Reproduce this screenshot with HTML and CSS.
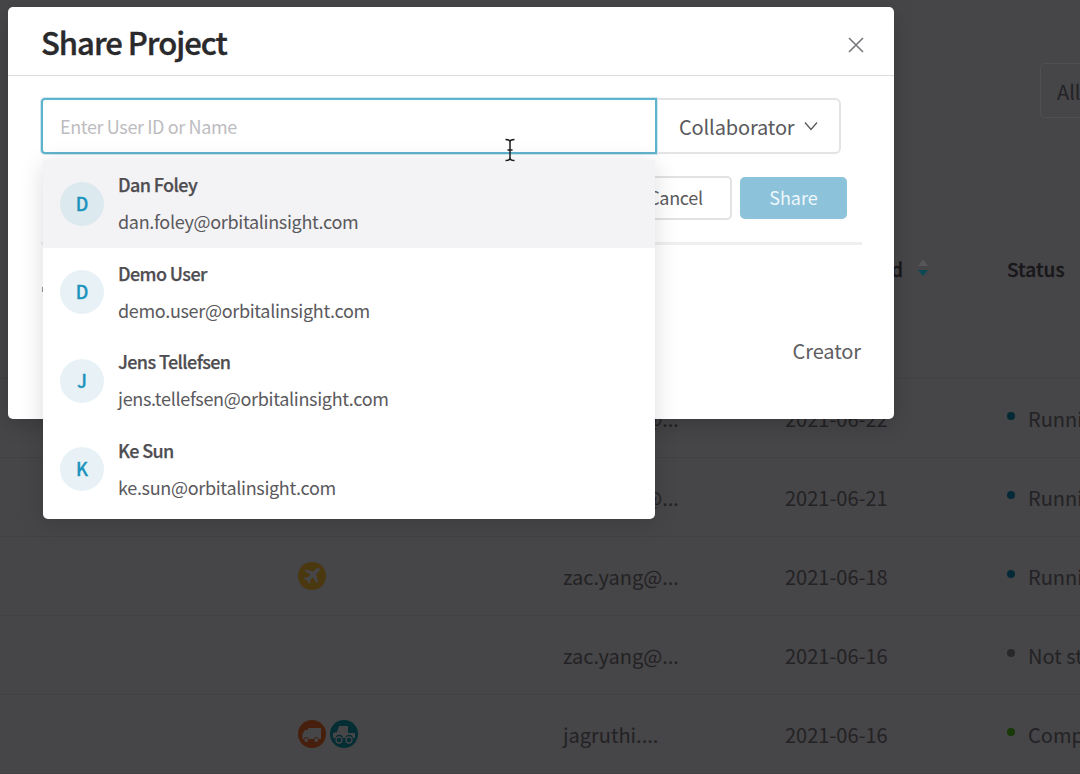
FILE: index.html
```html
<!DOCTYPE html>
<html lang="en">
<head>
<meta charset="utf-8">
<title>Share Project</title>
<link rel="stylesheet" href="styles.css">
</head>
<body>
<main class="page">
  <div class="toolbar"><div class="filter">All</div></div>
  <div class="table">
    <div class="row head">
      <div class="c-icons"></div>
      <div class="c-creator"></div>
      <div class="c-date strong">Date Created
        <svg class="sorter" width="12" height="18" viewBox="0 0 12 18"><path d="M6 0l5 7H1z" fill="#565559"/><path d="M1 11h10l-5 6z" fill="#0a4a55"/></svg>
      </div>
      <div class="c-status strong">Status</div>
    </div>
    <div class="row">
      <div class="c-icons"></div><div class="c-creator">zac.yang@...</div><div class="c-date"></div><div class="c-status"></div>
    </div>
    <div class="row">
      <div class="c-icons"></div><div class="c-creator">zac.yang@...</div><div class="c-date">2021-06-22</div>
      <div class="c-status"><i class="dot run"></i>Running</div>
    </div>
    <div class="row">
      <div class="c-icons"></div><div class="c-creator">zac.yang@...</div><div class="c-date">2021-06-21</div>
      <div class="c-status"><i class="dot run"></i>Running</div>
    </div>
    <div class="row">
      <div class="c-icons">
        <svg class="badge" viewBox="0 0 28 28"><circle cx="14" cy="14" r="14" fill="#4a380f"/><path class="glyph" d="M21.500 6.500c-1-1-2.500-.7-3.500.3l-2.600 2.600-7.500-1.900-1.500 1.500 6 3.600-3 3-2.600-.4-1.200 1.200 3.600 2 2 3.600 1.200-1.200-.4-2.600 3-3 3.600 6 1.500-1.500-1.900-7.500 2.600-2.600c1-1 1.300-2.500.7-3.100z"/></svg>
      </div>
      <div class="c-creator">zac.yang@...</div><div class="c-date">2021-06-18</div>
      <div class="c-status"><i class="dot run"></i>Running</div>
    </div>
    <div class="row">
      <div class="c-icons"></div><div class="c-creator">zac.yang@...</div><div class="c-date">2021-06-16</div>
      <div class="c-status"><i class="dot idle"></i>Not started</div>
    </div>
    <div class="row">
      <div class="c-icons">
        <svg class="badge" viewBox="0 0 28 28"><circle cx="14" cy="14" r="14" fill="#46200c"/><path class="glyph" d="M10 8h13v11h-2.200a2.600 2.600 0 0 0-5 0h-5a2.600 2.600 0 0 0-5 0H4.500v-5L7 10h3z"/><circle class="glyph" cx="8.300" cy="20" r="2"/><circle class="glyph" cx="18.300" cy="20" r="2"/></svg>
        <svg class="badge" viewBox="0 0 28 28"><circle cx="14" cy="14" r="14" fill="#052d34"/><path class="glyph" d="M9 6h9v7h7v5h-2a3.800 3.800 0 0 0-7.500 0h-2.500a3.800 3.800 0 0 0-7.500 0H3v-5l4-1z"/><circle class="wheel" cx="9" cy="20" r="3"/><circle class="wheel" cx="19" cy="20" r="3"/></svg>
      </div>
      <div class="c-creator">jagruthi....</div><div class="c-date">2021-06-16</div>
      <div class="c-status"><i class="dot done"></i>Completed</div>
    </div>
  </div>
</main>

<section class="modal">
  <header class="modal-head">
    <h1 class="modal-title">Share Project</h1>
    <svg class="close" width="18" height="18" viewBox="0 0 18 18"><path d="M2 2l14 14M16 2L2 16" stroke="#77767a" stroke-width="1.600" fill="none"/></svg>
  </header>
  <div class="modal-body">
    <div class="invite">
      <div class="input">Enter User ID or Name</div>
      <div class="select">Collaborator
        <svg width="14" height="10" viewBox="0 0 14 10"><path d="M1 1.500l6 7 6-7" stroke="#59585c" stroke-width="1.300" fill="none"/></svg>
      </div>
    </div>
    <div class="actions">
      <button class="btn">Cancel</button>
      <button class="btn primary">Share</button>
    </div>
    <div class="divider"></div>
    <div class="list-mark"></div>
    <div class="member"><span class="member-role">Creator</span></div>
  </div>
</section>

<ul class="dropdown">
  <li class="option active"><span class="avatar strong-bg">D</span><div class="who"><b>Dan Foley</b><span>dan.foley@orbitalinsight.com</span></div></li>
  <li class="option"><span class="avatar">D</span><div class="who"><b>Demo User</b><span>demo.user@orbitalinsight.com</span></div></li>
  <li class="option"><span class="avatar">J</span><div class="who"><b>Jens Tellefsen</b><span>jens.tellefsen@orbitalinsight.com</span></div></li>
  <li class="option"><span class="avatar">K</span><div class="who"><b>Ke Sun</b><span>ke.sun@orbitalinsight.com</span></div></li>
</ul>

<svg class="cursor" width="12" height="24" viewBox="0 0 12 24"><path d="M1.500 1.500c2.500 0 4.500.5 4.500 2.500v16c0 2-2 2.500-4.500 2.500M10.500 1.500C8 1.500 6 2 6 4v16c0 2 2 2.500 4.500 2.500M3.500 12h5" stroke="#1c1c1e" stroke-width="1.500" fill="none"/></svg>
</body>
</html>
```

FILE: styles.css
```css
* { box-sizing: border-box; }
html, body { margin: 0; height: 100%; }
body {
  width: 1080px;
  height: 774px;
  overflow: hidden;
  position: relative;
  background: #464548;
  font-family: "Noto Sans CJK SC", "Noto Sans", sans-serif;
  font-size: 20px;
  color: #232224;
}

/* dimmed page */
.page { padding-top: 63px; }
.toolbar { display: flex; padding-left: 1040px; height: 167px; }
.filter {
  width: 80px;
  height: 55px;
  flex: none;
  padding-left: 16px;
  line-height: 55px;
  font-size: 20px;
  border: 1px solid #504f53;
  border-radius: 5px;
}
.table { display: flex; flex-direction: column; }
.row {
  display: grid;
  grid-template-columns: 563px 222px 222px 73px;
  align-items: center;
  height: 79px;
  border-bottom: 1px solid #414043;
  white-space: nowrap;
}
.row.head { height: 71px; padding-top: 5px; border-bottom: 0; }
.row.head + .row { height: 78px; }
.c-icons { display: flex; gap: 4px; padding-left: 298px; }
.c-status { display: flex; align-items: center; gap: 13px; overflow: hidden; }
.c-date { display: flex; align-items: center; gap: 14px; }
.strong { font-size: 19px; font-weight: 500; color: #18171a; letter-spacing: .1px; -webkit-text-stroke: .3px #18171a; }
.dot { width: 8px; height: 8px; border-radius: 50%; flex: none; margin: -4px 0 0 0; }
.dot.run { background: #042937; }
.dot.idle { background: #282729; }
.dot.done { background: #183908; }
.badge { width: 28px; height: 28px; display: block; }
.glyph { fill: #464548; }
.wheel { fill: #052d34; stroke: #464548; stroke-width: 1.300; }

/* modal */
.modal {
  position: absolute;
  left: 8px;
  top: 7px;
  width: 886px;
  height: 412px;
  background: #fff;
  border-radius: 5px;
  box-shadow: 0 6px 20px rgba(0, 0, 0, .18);
  color: #555458;
}
.modal-head {
  height: 69px;
  padding: 0 29px 0 33px;
  display: flex;
  align-items: center;
  justify-content: space-between;
  border-bottom: 1px solid #dcdcdf;
}
.modal-title { margin: 0; font-size: 31px; font-weight: 500; color: #2a292c; letter-spacing: -1px; line-height: 1; -webkit-text-stroke: .4px #2a292c; }
.close { margin-top: 8px; }
.modal-body { padding: 22px 32px 0 33px; }
.invite { display: flex; height: 56px; }
.input {
  width: 616px;
  flex: none;
  border: 2px solid #5fb4cd;
  border-radius: 4px 0 0 4px;
  padding-left: 17px;
  line-height: 52px;
  font-size: 18px;
  letter-spacing: -.38px;
  color: #bdbcc0;
  box-shadow: 0 0 0 1px #cfe7ef;
}
.select {
  width: 184px;
  flex: none;
  border: 2px solid #e4e4e6;
  border-left: 0;
  border-radius: 0 6px 6px 0;
  padding-left: 22px;
  display: flex;
  align-items: center;
  gap: 10px;
  font-size: 20px;
  letter-spacing: -.15px;
  color: #59585c;
}
.actions { display: flex; justify-content: flex-end; align-items: center; gap: 8px; height: 44px; margin-top: 22px; padding-right: 15px; }
.btn {
  font: inherit;
  font-size: 18px;
  height: 44px;
  width: 113px;
  border: 2px solid #e2e2e4;
  border-radius: 5px;
  background: #fff;
  color: #5a595d;
  padding: 0 0 2px;
  letter-spacing: -.3px;
}
.btn.primary { height: 42px; width: 107px; background: #8cc2da; border: 0; color: #eef7fa; letter-spacing: 0; }
.divider { height: 3px; background: #efeff0; margin-top: 22px; }
.list-mark { width: 2px; height: 5px; margin: 42px 0 0 1px; background: #9a999d; }
.member { display: flex; justify-content: flex-end; margin-top: 45px; padding-right: 1px; }
.member-role { font-size: 20px; line-height: 28px; letter-spacing: -.1px; color: #5e5d61; }

/* dropdown */
.dropdown {
  position: absolute;
  left: 43px;
  top: 160px;
  width: 612px;
  height: 359px;
  margin: 0;
  padding: 0;
  list-style: none;
  background: #fff;
  border-radius: 0 0 5px 5px;
  box-shadow: 0 4px 24px rgba(0, 0, 0, .14);
}
.option { height: 88.500px; display: flex; align-items: center; gap: 14px; padding-left: 17px; }
.option.active { height: 88px; background: #f3f3f5; }
.avatar {
  width: 44px;
  height: 44px;
  flex: none;
  border-radius: 50%;
  background: #e7f1f6;
  color: #1b93bd;
  font-size: 18px;
  font-weight: 500;
  line-height: 43px;
  text-align: center;
  -webkit-text-stroke: .3px #1b93bd;
}
.avatar.strong-bg { background: #dce9ee; }
.who { display: flex; flex-direction: column; gap: 11px; margin-top: -2.500px; }
.who b { font-size: 18px; line-height: 26px; font-weight: 500; color: #4e4d51; letter-spacing: -.6px; -webkit-text-stroke: .25px #4e4d51; }
.who span { font-size: 18px; line-height: 26px; letter-spacing: -.32px; color: #5a595d; }

.cursor { position: absolute; left: 504px; top: 138px; }
```
